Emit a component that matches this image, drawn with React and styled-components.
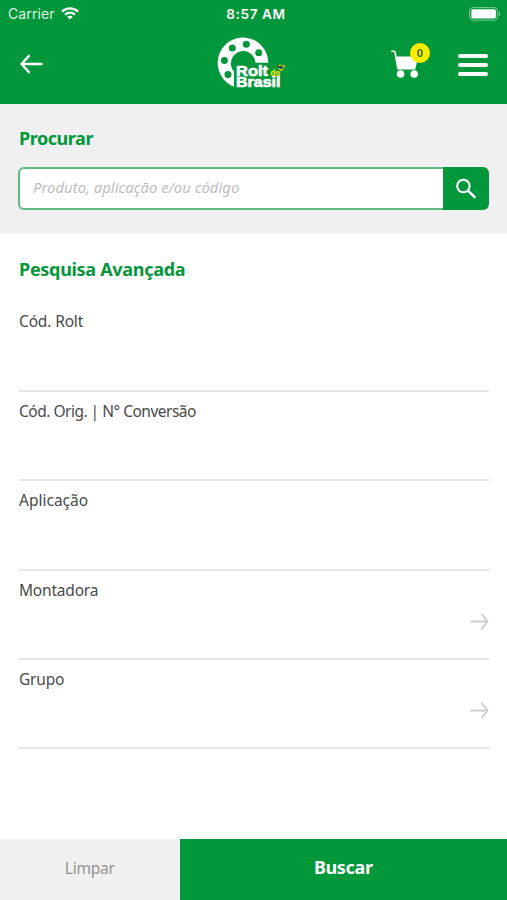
import React from "react";
import styled, { createGlobalStyle } from "styled-components";

const App = () => {
  return (
    <>
      <GlobalStyle />
      <Wrapper>
        <Header>
          <StatusBar>
            <Carrier>
              Carrier
              <WifiIcon />
            </Carrier>
            <Clock>8:57 AM</Clock>
            <BatteryIcon />
          </StatusBar>
          <NavBar>
            <BackButton aria-label="Voltar">
              <svg width="24" height="20" viewBox="0 0 24 20" fill="none" stroke="#fff" strokeWidth="2.6" strokeLinecap="round" strokeLinejoin="round">
                <path d="M22.4 10H3M9.8 2L2.6 10l7.2 8" />
              </svg>
            </BackButton>
            <Logo />
            <Actions>
              <CartButton aria-label="Carrinho">
                <CartIcon />
                <Badge>0</Badge>
              </CartButton>
              <MenuButton aria-label="Menu">
                <MenuLine />
                <MenuLine />
                <MenuLine />
              </MenuButton>
            </Actions>
          </NavBar>
        </Header>
        <SearchSection>
          <Title $spacing="-0.45px">Procurar</Title>
          <SearchBox>
            <SearchInput placeholder="Produto, aplicação e/ou código" />
            <SearchButton aria-label="Procurar">
              <svg width="22" height="22" viewBox="0 0 22 22" fill="none" stroke="#fff" strokeLinecap="round">
                <circle cx="8.4" cy="8" r="6.2" strokeWidth="2.1" />
                <path d="M13.2 12.8l6.4 6.4" strokeWidth="2.6" />
              </svg>
            </SearchButton>
          </SearchBox>
        </SearchSection>
        <Form>
          <Title $spacing="-0.3px">Pesquisa Avançada</Title>
          <Fields>
            {fields.map(({ label, spacing, select }) => (
              <Field key={label}>
                <Label $spacing={spacing}>{label}</Label>
                {select && <ArrowIcon />}
              </Field>
            ))}
          </Fields>
        </Form>
        <Footer>
          <ClearButton>Limpar</ClearButton>
          <SubmitButton>Buscar</SubmitButton>
        </Footer>
      </Wrapper>
    </>
  );
};

export default App;

const fields = [
  { label: "Cód. Rolt", spacing: "-0.15px" },
  { label: "Cód. Orig. | N° Conversão", spacing: "-0.5px" },
  { label: "Aplicação", spacing: "0" },
  { label: "Montadora", spacing: "-0.2px", select: true },
  { label: "Grupo", spacing: "-0.2px", select: true },
];

const WifiIcon = () => (
  <svg width="18" height="13" viewBox="0 0 18 13" fill="none" stroke="#fff" strokeWidth="2.2">
    <path d="M1 4.6C5.4 .3 12.6 .3 17 4.6" />
    <path d="M4 7.7C6.8 5 11.2 5 14 7.7" />
    <path d="M9 12.6L6.2 9.8C7.7 8.4 10.3 8.4 11.8 9.8Z" fill="#fff" stroke="none" />
  </svg>
);

const BatteryIcon = () => (
  <svg width="32" height="14" viewBox="0 0 32 14">
    <rect x="0.6" y="0.6" width="28" height="12.6" rx="3.4" fill="none" stroke="#7dcb98" strokeWidth="1" />
    <rect x="2.3" y="2.3" width="24.6" height="9.2" rx="1.8" fill="#fff" />
    <path d="M30 4.8c1.6.5 1.6 3.7 0 4.2z" fill="#7dcb98" />
  </svg>
);

const Logo = () => (
  <LogoSvg viewBox="0 0 70 54" aria-label="Rolt do Brasil">
    <path
      d="M52.3 25.8A25.3 25.5 0 1 0 18 49.8V34.8A12.3 12.5 0 1 1 39.5 25.8Z"
      fill="#fff"
    />
    <g fill="#03973c">
      <circle cx="16.3" cy="11" r="3.5" />
      <circle cx="30.3" cy="7.3" r="3.5" />
      <circle cx="42.7" cy="15.7" r="3.5" />
      <circle cx="8.4" cy="23.4" r="3.5" />
      <circle cx="12" cy="37.4" r="3.5" />
    </g>
    <LogoText x="20" y="38.9" $size={15} textLength="32" lengthAdjust="spacingAndGlyphs">Rolt</LogoText>
    <LogoText x="20" y="50.3" $size={14.2} textLength="44.4" lengthAdjust="spacingAndGlyphs">Brasil</LogoText>
    <LogoText x="54.4" y="38.7" $size={8.5} textLength="9.6" lengthAdjust="spacingAndGlyphs" $yellow>do</LogoText>
    <path d="M60 28.8l4.5-1.2 4.9 1.2-2 2.8-1.8 3-3.3-2.5z" fill="#c9cf1b" />
    <path d="M59.6 28.4l3.4.2 1.2 2.2-1.6.7z" fill="#14532d" />
    <circle cx="65.2" cy="30.2" r="1.8" fill="#174b55" />
  </LogoSvg>
);

const CartIcon = () => (
  <svg width="30" height="30" viewBox="0 0 30 30">
    <path d="M1.8 2.2h1.6c1 0 1.6.5 1.8 1.5L7.8 19.6h17" fill="none" stroke="#fff" strokeWidth="1.6" strokeLinecap="round" />
    <path d="M6 7.6h22.2l-2.4 10.4c-.2 1-.8 1.5-1.8 1.5H9.5c-1 0-1.5-.5-1.7-1.5z" fill="#fff" />
    <circle cx="10.6" cy="25" r="3.8" fill="#fff" />
    <circle cx="24.2" cy="25" r="3.8" fill="#fff" />
  </svg>
);

const ArrowIcon = () => (
  <svg width="19" height="17" viewBox="0 0 19 17" fill="none" stroke="#cfcfcf" strokeWidth="1.9" strokeLinecap="round" strokeLinejoin="round">
    <path d="M1 8.5h16.6M11.8 1.2l5.8 7.3-5.8 7.3" />
  </svg>
);

const GlobalStyle = createGlobalStyle`
  * {
    box-sizing: border-box;
  }
  body {
    margin: 0;
    font-family: "Noto Sans", sans-serif;
    background: #fff;
  }
  button {
    padding: 0;
    border: 0;
    background: none;
    font-family: inherit;
  }
`;

const Wrapper = styled.div`
  height: 900px;
  width: 100%;
  display: flex;
  flex-direction: column;
`;

const Header = styled.header`
  height: 103.5px;
  flex-shrink: 0;
  background: #03973c;
  color: #fff;
`;

const StatusBar = styled.div`
  height: 27px;
  padding: 0 6px 0 8px;
  display: grid;
  grid-template-columns: 1fr auto 1fr;
  align-items: center;
  font-family: Inter, sans-serif;
  font-size: 14px;

  > :last-child {
    justify-self: end;
  }
`;

const Carrier = styled.div`
  display: flex;
  align-items: center;
  gap: 6px;
  color: #dff3e5;
  letter-spacing: 0.1px;
`;

const Clock = styled.div`
  padding-left: 3px;
  font-weight: 600;
  font-size: 13.6px;
  letter-spacing: 0.6px;
`;

const NavBar = styled.div`
  height: 76px;
  padding: 0 19px 0 19px;
  display: grid;
  grid-template-columns: 1fr auto 1fr;
  align-items: center;
`;

const BackButton = styled.button`
  height: 20px;
  justify-self: start;
  margin-bottom: 2px;

  svg {
    display: block;
  }
`;

const LogoSvg = styled.svg`
  width: 70px;
  height: 54px;
  margin: 0 5px 2px 0;
`;

const LogoText = styled.text`
  font-family: "Liberation Sans", sans-serif;
  font-size: ${({ $size }) => $size}px;
  font-weight: 700;
  fill: ${({ $yellow }) => ($yellow ? "#f2e713" : "#fff")};
  stroke: ${({ $yellow }) => ($yellow ? "#f2e713" : "#fff")};
  stroke-width: ${({ $yellow }) => ($yellow ? 0.2 : 0.6)};
`;

const Actions = styled.div`
  justify-self: end;
  display: flex;
  align-items: center;
  gap: 38px;
`;

const CartButton = styled.button`
  position: relative;
  height: 30px;
  margin-bottom: 2px;

  svg {
    display: block;
  }
`;

const Badge = styled.span`
  position: absolute;
  top: -6px;
  left: 20px;
  width: 20px;
  height: 20px;
  border-radius: 50%;
  background: #fbed00;
  color: #3b7a1c;
  font-size: 11px;
  font-weight: 700;
  line-height: 19px;
  text-align: center;
`;

const MenuButton = styled.button`
  width: 30px;
  display: flex;
  flex-direction: column;
  gap: 5px;
`;

const MenuLine = styled.span`
  height: 4px;
  border-radius: 2px;
  background: #fff;
`;

const SearchSection = styled.section`
  height: 130.5px;
  flex-shrink: 0;
  padding: 21.5px 18px 0;
  background: #f0f0f0;
`;

const Title = styled.h2`
  margin: 0 0 0 1px;
  color: #03973c;
  font-size: 18px;
  font-weight: 700;
  line-height: 26px;
  letter-spacing: ${({ $spacing }) => $spacing};
`;

const SearchBox = styled.div`
  height: 43px;
  margin-top: 16px;
  display: flex;
`;

const SearchInput = styled.input`
  flex: 1;
  min-width: 0;
  padding: 0 13px 4px;
  border: 2px solid #5dba81;
  border-right: 0;
  border-radius: 6px 0 0 6px;
  background: #fff;
  font-family: inherit;
  font-size: 14.9px;
  outline: 0;

  &::placeholder {
    color: #bdbdbd;
    font-style: italic;
  }
`;

const SearchButton = styled.button`
  width: 46px;
  display: flex;
  align-items: center;
  justify-content: center;
  border-radius: 0 6px 6px 0;
  background: #03973c;
`;

const Form = styled.section`
  flex: 1;
  padding: 22px 18px 0;
`;

const Fields = styled.div`
  margin: 20px 0 0 1px;
`;

const Field = styled.div`
  height: 89.25px;
  padding-top: 7px;
  display: flex;
  flex-direction: column;
  border-bottom: 2px solid #e6e6e6;

  &:first-child {
    height: 90px;
  }

  svg {
    align-self: flex-end;
    margin-top: 11px;
  }
`;

const Label = styled.label`
  color: #4a4a4a;
  font-size: 15.5px;
  line-height: 24px;
  letter-spacing: ${({ $spacing }) => $spacing};
`;

const Footer = styled.footer`
  height: 61px;
  flex-shrink: 0;
  display: flex;
`;

const ClearButton = styled.button`
  width: 179.5px;
  padding-bottom: 4px;
  background: #f0f0f0;
  color: #929292;
  font-size: 15.5px;
  letter-spacing: -0.2px;
`;

const SubmitButton = styled.button`
  flex: 1;
  padding-bottom: 5px;
  background: #03973c;
  color: #fff;
  font-size: 18px;
  font-weight: 700;
  letter-spacing: -0.35px;
`;
